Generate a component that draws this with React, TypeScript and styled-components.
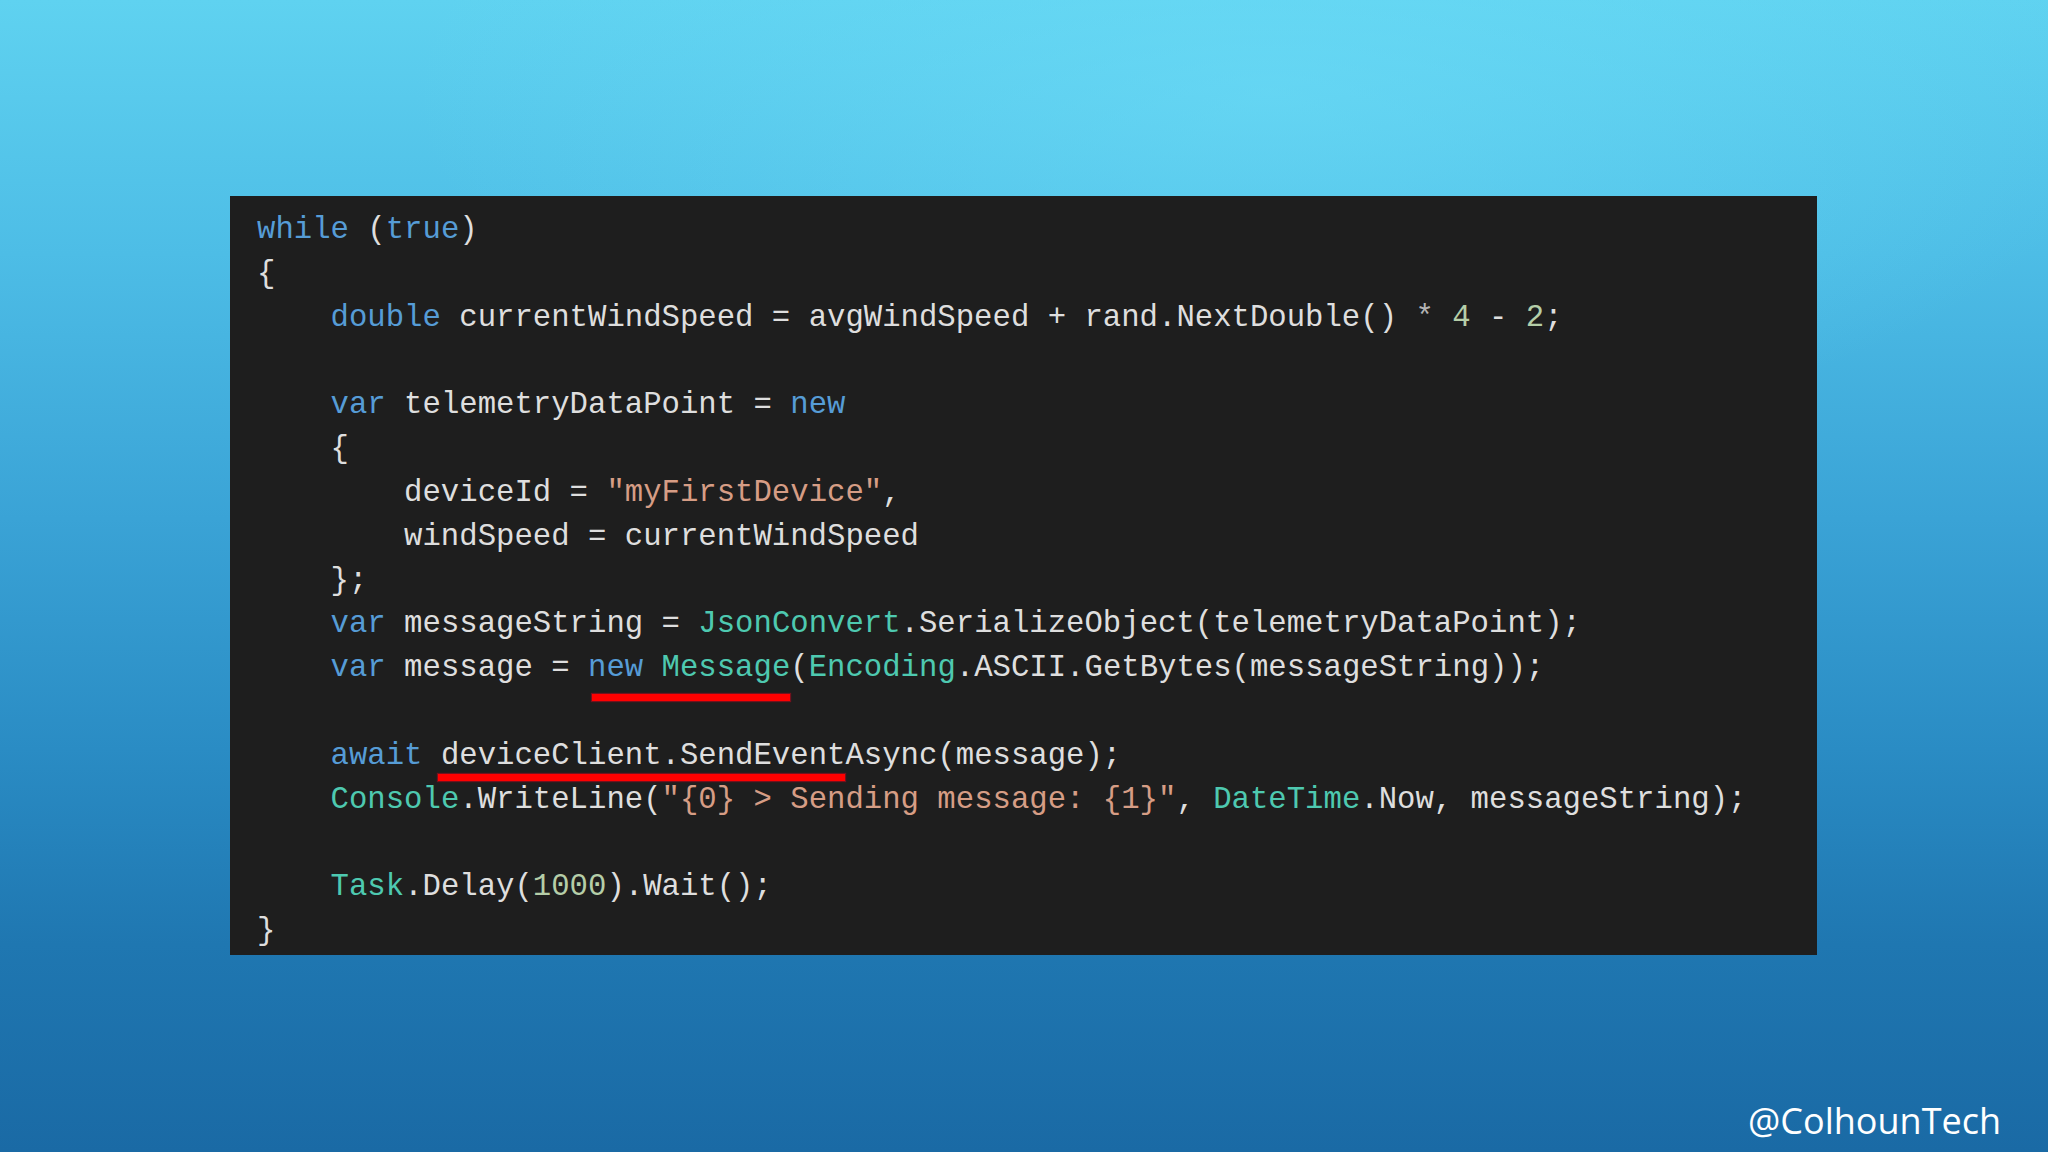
import React from "react";
import styled, { createGlobalStyle } from "styled-components";

const GlobalStyle = createGlobalStyle`
  html, body {
    margin: 0;
    padding: 0;
    width: 100%;
    height: 100%;
  }
  body {
    overflow: hidden;
  }
`;

const Page = styled.main`
  width: 2048px;
  height: 1152px;
  box-sizing: border-box;
  display: flex;
  flex-direction: column;
  padding-top: 196px;
  background:
    radial-gradient(ellipse 60% 45% at 62% 8%, rgba(110, 222, 248, 0.55), rgba(110, 222, 248, 0) 70%),
    linear-gradient(180deg, #5fd2f0 0%, #4dbde6 22%, #3aa3d6 45%, #2a8cc4 65%, #1f77b1 82%, #1a6aa5 100%);
`;

const CodePanel = styled.section`
  margin-left: 230px;
  width: 1587px;
  height: 759px;
  box-sizing: border-box;
  padding: 12px 0 0 27px;
  background: #1e1e1e;
  display: flex;
  flex-direction: column;
  font-family: "Liberation Mono", "DejaVu Sans Mono", monospace;
  font-size: 30.65px;
  color: #dedede;
`;

const CodeLine = styled.div`
  height: 43.84px;
  line-height: 43.84px;
  white-space: pre;
`;

type Kind = "kw" | "type" | "str" | "num" | "op" | "plain";

const colors: Record<Kind, string> = {
  kw: "#569cd6",
  type: "#4ec9b0",
  str: "#d69d85",
  num: "#b5cea8",
  op: "#b4b4b4",
  plain: "#dedede",
};

const Tok = styled.span<{ $k: Kind }>`
  color: ${(p) => colors[p.$k]};
`;

const Marked = styled.span<{ $offset: number; $inset: number }>`
  position: relative;
  &::after {
    content: "";
    position: absolute;
    left: ${(p) => p.$inset}px;
    right: 0;
    bottom: ${(p) => -p.$offset}px;
    height: 7px;
    background: #ff0000;
    box-shadow: 0 0 1px 1px rgba(170, 10, 30, 0.6);
  }
`;

const Spacer = styled.div`
  flex: 1;
`;

const Watermark = styled.div`
  align-self: flex-end;
  margin: 0 47px 7px 0;
  line-height: 48px;
  font-family: "Open Sans", "Noto Sans", sans-serif;
  font-weight: 400;
  font-size: 36px;
  color: #ffffff;
`;

const K = ({ children }: { children: React.ReactNode }) => <Tok $k="kw">{children}</Tok>;
const T = ({ children }: { children: React.ReactNode }) => <Tok $k="type">{children}</Tok>;
const S = ({ children }: { children: React.ReactNode }) => <Tok $k="str">{children}</Tok>;
const N = ({ children }: { children: React.ReactNode }) => <Tok $k="num">{children}</Tok>;
const O = ({ children }: { children: React.ReactNode }) => <Tok $k="op">{children}</Tok>;

export default function App() {
  return (
    <>
      <GlobalStyle />
      <Page>
        <CodePanel>
          <CodeLine>
            <K>while</K> (<K>true</K>)
          </CodeLine>
          <CodeLine>{"{"}</CodeLine>
          <CodeLine>
            {"    "}
            <K>double</K> currentWindSpeed = avgWindSpeed + rand.NextDouble() <O>*</O> <N>4</N> - <N>2</N>;
          </CodeLine>
          <CodeLine> </CodeLine>
          <CodeLine>
            {"    "}
            <K>var</K> telemetryDataPoint = <K>new</K>
          </CodeLine>
          <CodeLine>{"    {"}</CodeLine>
          <CodeLine>
            {"        deviceId = "}
            <S>"myFirstDevice"</S>,
          </CodeLine>
          <CodeLine>{"        windSpeed = currentWindSpeed"}</CodeLine>
          <CodeLine>{"    };"}</CodeLine>
          <CodeLine>
            {"    "}
            <K>var</K> messageString = <T>JsonConvert</T>.SerializeObject(telemetryDataPoint);
          </CodeLine>
          <CodeLine>
            {"    "}
            <K>var</K> message ={" "}
            <Marked $offset={16} $inset={4}>
              <K>new</K> <T>Message</T>
            </Marked>
            (<T>Encoding</T>.ASCII.GetBytes(messageString));
          </CodeLine>
          <CodeLine> </CodeLine>
          <CodeLine>
            {"    "}
            <K>await</K>{" "}
            <Marked $offset={8} $inset={-3}>deviceClient.SendEvent</Marked>Async(message);
          </CodeLine>
          <CodeLine>
            {"    "}
            <T>Console</T>.WriteLine(<S>"{"{0} > Sending message: {1}"}"</S>, <T>DateTime</T>.Now, messageString);
          </CodeLine>
          <CodeLine> </CodeLine>
          <CodeLine>
            {"    "}
            <T>Task</T>.Delay(<N>1000</N>).Wait();
          </CodeLine>
          <CodeLine>{"}"}</CodeLine>
        </CodePanel>
        <Spacer />
        <Watermark>@ColhounTech</Watermark>
      </Page>
    </>
  );
}
